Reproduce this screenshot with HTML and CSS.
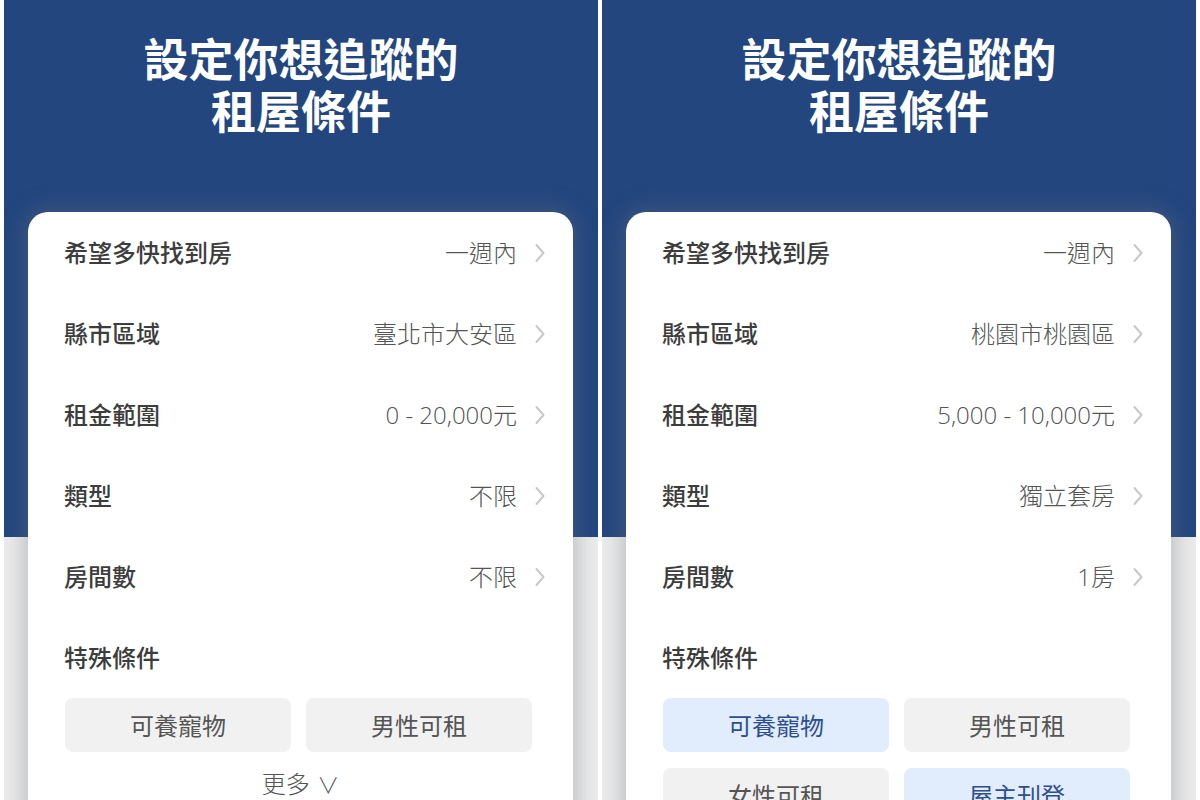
FILE: index.html
```html
<!DOCTYPE html>
<html lang="zh-Hant">
<head>
<meta charset="utf-8">
<title>租屋條件</title>
<link rel="stylesheet" href="styles.css">
</head>
<body>
<div class="screens">
  <section class="panel">
    <h1 class="title">設定你想追蹤的<br>租屋條件</h1>
    <div class="card">
      <div class="row"><span class="label">希望多快找到房</span><span class="value">一週內</span><svg class="chev" viewBox="0 0 12 22"><path d="M2.5 3 L9.5 11 L2.5 19"/></svg></div>
      <div class="row"><span class="label">縣市區域</span><span class="value">臺北市大安區</span><svg class="chev" viewBox="0 0 12 22"><path d="M2.5 3 L9.5 11 L2.5 19"/></svg></div>
      <div class="row"><span class="label">租金範圍</span><span class="value">0 - 20,000元</span><svg class="chev" viewBox="0 0 12 22"><path d="M2.5 3 L9.5 11 L2.5 19"/></svg></div>
      <div class="row"><span class="label">類型</span><span class="value">不限</span><svg class="chev" viewBox="0 0 12 22"><path d="M2.5 3 L9.5 11 L2.5 19"/></svg></div>
      <div class="row"><span class="label">房間數</span><span class="value">不限</span><svg class="chev" viewBox="0 0 12 22"><path d="M2.5 3 L9.5 11 L2.5 19"/></svg></div>
      <div class="row"><span class="label">特殊條件</span></div>
      <div class="chips">
        <div class="chip">可養寵物</div>
        <div class="chip">男性可租</div>
      </div>
      <div class="more">更多 <span class="more-v">∨</span></div>
    </div>
  </section>
  <section class="panel">
    <h1 class="title">設定你想追蹤的<br>租屋條件</h1>
    <div class="card">
      <div class="row"><span class="label">希望多快找到房</span><span class="value">一週內</span><svg class="chev" viewBox="0 0 12 22"><path d="M2.5 3 L9.5 11 L2.5 19"/></svg></div>
      <div class="row"><span class="label">縣市區域</span><span class="value">桃園市桃園區</span><svg class="chev" viewBox="0 0 12 22"><path d="M2.5 3 L9.5 11 L2.5 19"/></svg></div>
      <div class="row"><span class="label">租金範圍</span><span class="value">5,000 - 10,000元</span><svg class="chev" viewBox="0 0 12 22"><path d="M2.5 3 L9.5 11 L2.5 19"/></svg></div>
      <div class="row"><span class="label">類型</span><span class="value">獨立套房</span><svg class="chev" viewBox="0 0 12 22"><path d="M2.5 3 L9.5 11 L2.5 19"/></svg></div>
      <div class="row"><span class="label">房間數</span><span class="value">1房</span><svg class="chev" viewBox="0 0 12 22"><path d="M2.5 3 L9.5 11 L2.5 19"/></svg></div>
      <div class="row"><span class="label">特殊條件</span></div>
      <div class="chips">
        <div class="chip selected">可養寵物</div>
        <div class="chip">男性可租</div>
        <div class="chip">女性可租</div>
        <div class="chip selected">屋主刊登</div>
      </div>
    </div>
  </section>
</div>
</body>
</html>
```

FILE: styles.css
```css
html, body {
  margin: 0;
  padding: 0;
  background: #ffffff;
}
body {
  font-family: "Noto Sans CJK TC", "Noto Sans", sans-serif;
  width: 1200px;
  height: 800px;
  overflow: hidden;
}
.screens {
  display: flex;
  gap: 4px;
  padding: 0 4px;
  height: 800px;
}
.panel {
  width: 594px;
  height: 800px;
  overflow: hidden;
  background: linear-gradient(to bottom, #23467f 0, #23467f 537px, #ececec 537px, #ececec 100%);
  display: flex;
  flex-direction: column;
}
.title {
  margin: 32px 0 0;
  color: #ffffff;
  font-size: 45px;
  font-weight: 700;
  line-height: 52px;
  text-align: center;
  letter-spacing: 0;
}
.card {
  margin: 76px 25px 0 24px;
  background: #ffffff;
  border-radius: 20px;
  box-shadow: 0 0 22px 4px rgba(105, 110, 120, 0.38);
  flex: 1 0 auto;
  padding-bottom: 40px;
}
.row {
  height: 81px;
  display: flex;
  align-items: center;
  padding: 0 27px 0 36px;
}
.label {
  font-size: 24px;
  font-weight: 500;
  color: #3d3d3d;
  flex: 1;
  margin-top: -3px;
}
.value {
  font-family: "Open Sans", "Noto Sans CJK TC", sans-serif;
  font-size: 24px;
  font-weight: 300;
  color: #555555;
  margin-top: -3px;
}
.chev {
  width: 12px;
  height: 22px;
  margin-left: 17px;
  fill: none;
  stroke: #c8c8c8;
  stroke-width: 2;
  stroke-linecap: round;
  stroke-linejoin: round;
}
.chips {
  display: grid;
  grid-template-columns: 1fr 1fr;
  column-gap: 15px;
  row-gap: 16px;
  margin: 0 41px 0 37px;
}
.chip {
  height: 54px;
  border-radius: 8px;
  background: #f1f1f1;
  color: #555555;
  font-size: 24px;
  font-weight: 400;
  display: flex;
  align-items: center;
  justify-content: center;
  padding-bottom: 2px;
  box-sizing: border-box;
}
.chip.selected {
  background: #e1ecfc;
  color: #2d4f8c;
}
.more {
  margin-top: 14px;
  text-align: center;
  font-size: 24px;
  font-weight: 300;
  color: #555555;
  line-height: 34px;
}
.more-v {
  font-size: 22px;
  margin-left: 2px;
}
```
